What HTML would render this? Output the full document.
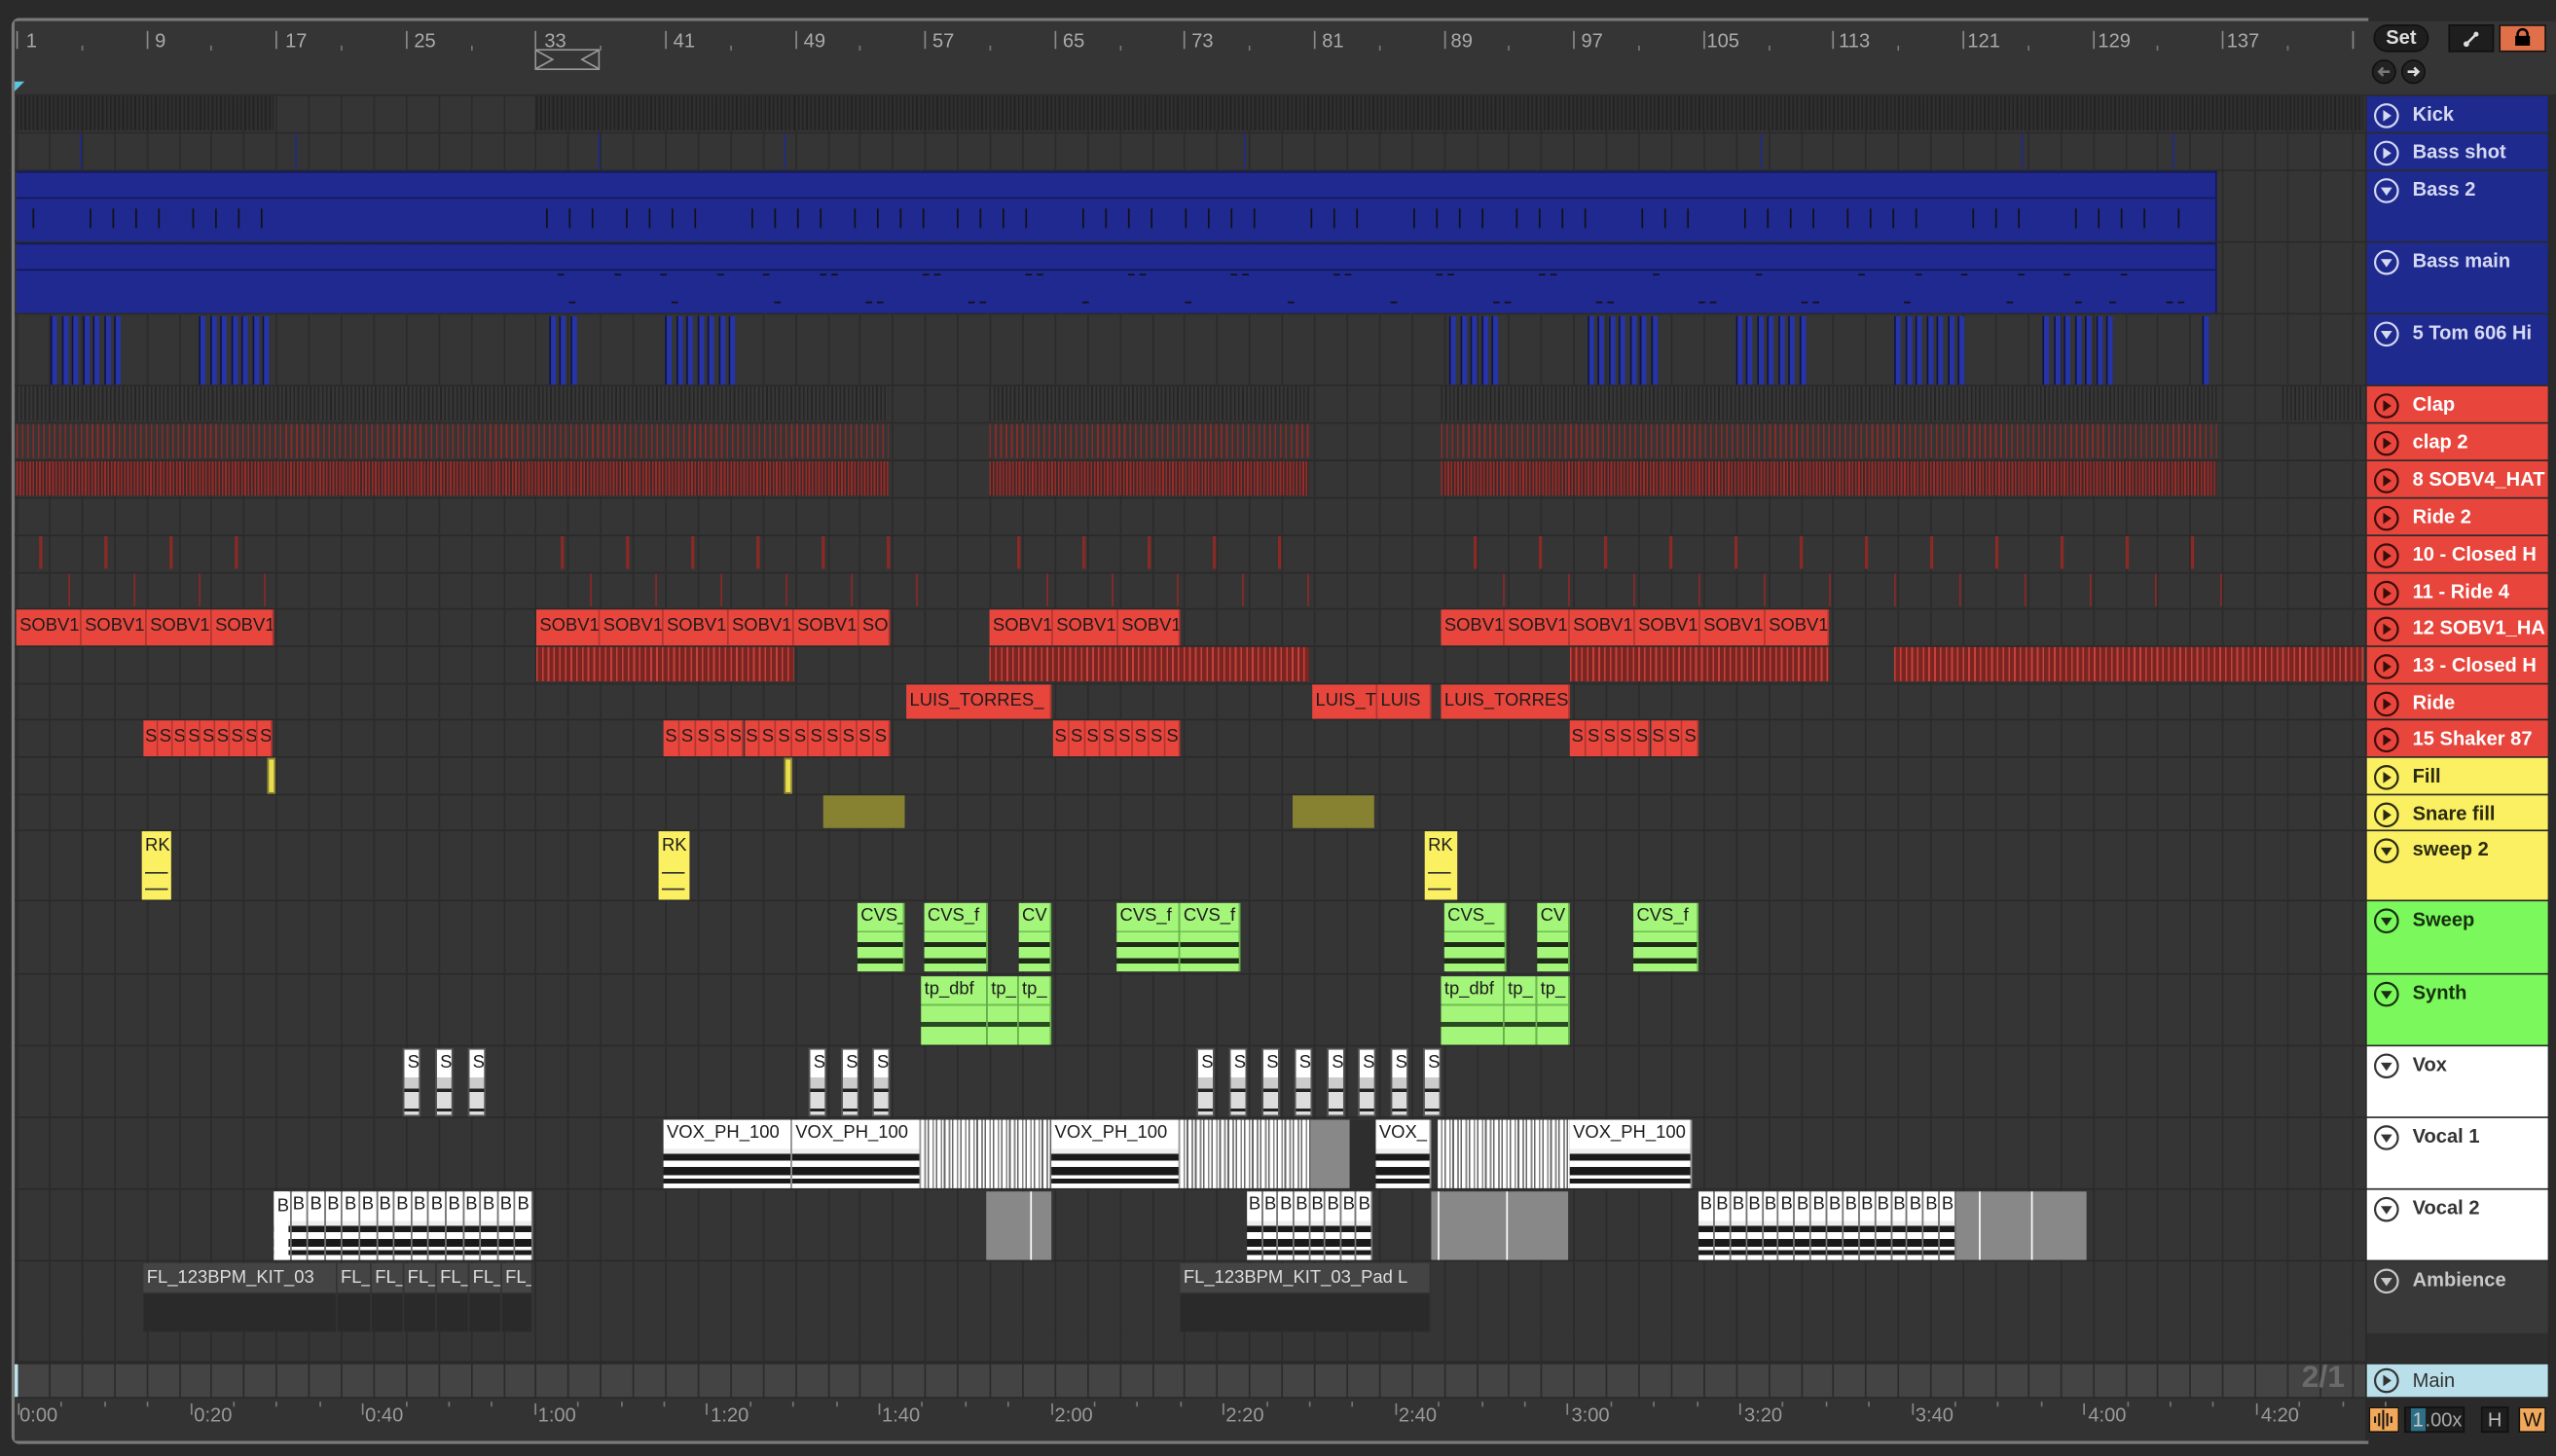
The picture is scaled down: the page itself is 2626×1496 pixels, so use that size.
<!DOCTYPE html>
<html><head><meta charset="utf-8">
<style>
html,body{margin:0;padding:0;background:#2a2a2a;width:2626px;height:1496px;overflow:hidden}
#s{position:absolute;left:0;top:0;width:1568px;height:893px;transform:scale(1.67474);transform-origin:0 0;background:#2a2a2a;font-family:"Liberation Sans",sans-serif}
.a{position:absolute}
.c{position:absolute;box-sizing:border-box;overflow:hidden;white-space:nowrap;font:11px "Liberation Sans Narrow","Liberation Sans",sans-serif;padding-left:2px;color:#1c1c1c}
.rd{background:#e8463d;border-right:1px solid #b23530;line-height:20px}
.h{position:absolute;left:1452px;width:111px;box-sizing:border-box;font:bold 12px "Liberation Sans",sans-serif;padding-left:28px;line-height:22px}
.h svg{position:absolute;left:4px;top:4px}
.bl{background:#1f2a8f;color:#d6d9f2}
.re{background:#e8453c;color:#fff}
.ye{background:#fbf062;color:#2a2a10}
.gr{background:#7bf95c;color:#17300f}
.wh{background:#fff;color:#333}
.lbl{position:absolute;top:18px;font:12px "Liberation Sans",sans-serif;color:#aaa}
.tl{position:absolute;top:861px;font:12px "Liberation Sans",sans-serif;color:#999}
.y2{background:#fbf062}
.g2{background:#a4f67a;border-right:1px solid #6ab84d}
.w2{background:#fff;border-right:1px solid #999}
</style></head><body><div id="s">
<div class="a" style="left:7px;top:11px;width:1446px;height:875px;border:2px solid #7a7a7a;border-right:none;border-radius:5px 0 0 5px;box-sizing:border-box"></div>
<div class="a" style="left:9px;top:13px;width:1442px;height:45px;background:#353535"></div>
<div class="a" style="left:1451px;top:13px;width:117px;height:45px;background:#353535"></div>
<div id="arr" class="a" style="left:9px;top:58px;width:1442px;height:800px;background:#2a2a2a;overflow:hidden"></div>
<div class="a" style="left:9px;top:858px;width:1442px;height:26px;background:#333"></div>
<div class="a" style="left:9px;top:837px;width:2px;height:20px;background:#bfe6f0"></div>
<div class="a" style="left:9px;top:50px;width:0;height:0;border-left:6px solid #5bc8e0;border-bottom:6px solid transparent"></div>
<div class="lbl" style="left:16px">1</div><div class="lbl" style="left:95px">9</div><div class="lbl" style="left:175px">17</div><div class="lbl" style="left:254px">25</div><div class="lbl" style="left:334px">33</div><div class="lbl" style="left:413px">41</div><div class="lbl" style="left:493px">49</div><div class="lbl" style="left:572px">57</div><div class="lbl" style="left:652px">65</div><div class="lbl" style="left:731px">73</div><div class="lbl" style="left:811px">81</div><div class="lbl" style="left:890px">89</div><div class="lbl" style="left:970px">97</div><div class="lbl" style="left:1047px">105</div><div class="lbl" style="left:1128px">113</div><div class="lbl" style="left:1207px">121</div><div class="lbl" style="left:1287px">129</div><div class="lbl" style="left:1366px">137</div>
<div id="rt" class="a" style="left:0;top:0"></div>
<svg class="a" style="left:328px;top:30px" width="40" height="13"><rect x="0.5" y="0.5" width="39" height="12" fill="none" stroke="#999"/><path d="M1 1 L11 6.5 L1 12 M39 1 L29 6.5 L39 12" fill="none" stroke="#999"/></svg>
<div class="a" style="left:1456px;top:15px;width:34px;height:17px;border-radius:9px;background:#1e1e1e;border:1px solid #111;box-sizing:border-box;color:#ddd;font:bold 12px 'Liberation Sans',sans-serif;text-align:center;line-height:15px">Set</div>
<div class="a" style="left:1502px;top:15px;width:28px;height:17px;background:#1e1e1e;border:1px solid #111;box-sizing:border-box"><svg width="26" height="15"><path d="M10 11 L16 5" stroke="#ddd" stroke-width="1.5"/><circle cx="10" cy="11" r="1.7" fill="#ddd"/><circle cx="16" cy="5" r="1.5" fill="#ddd"/></svg></div>
<div class="a" style="left:1533px;top:15px;width:29px;height:17px;background:#e07049;border:1px solid #111;box-sizing:border-box"><svg width="27" height="15"><rect x="9" y="6" width="9" height="6" fill="#000"/><path d="M10.5 7 V5 a3 3 0 0 1 6 0 V7" stroke="#000" stroke-width="1.5" fill="none"/></svg></div>
<svg class="a" style="left:1455px;top:36px" width="34" height="16"><circle cx="7.5" cy="8" r="7" fill="#222" stroke="#111"/><path d="M11 8 H5 M7 5.5 L4.5 8 L7 10.5" stroke="#777" stroke-width="1.5" fill="none"/><circle cx="25.5" cy="8" r="7" fill="#222" stroke="#111"/><path d="M22 8 H28 M26 5.5 L28.5 8 L26 10.5" stroke="#ddd" stroke-width="1.5" fill="none"/></svg>
<div class="a" style="left:1563px;top:58px;width:5px;height:800px;background:#2a2a2a"></div>

<div class="h bl" style="top:59px;height:22px"><svg width="16" height="16"><circle cx="8" cy="8" r="7" fill="none" stroke="#d6d9f2" stroke-width="1.3"/><path d="M6 4.5 L11 8 L6 11.5Z" fill="#d6d9f2"/></svg>Kick</div>
<div class="h bl" style="top:82px;height:22px"><svg width="16" height="16"><circle cx="8" cy="8" r="7" fill="none" stroke="#d6d9f2" stroke-width="1.3"/><path d="M6 4.5 L11 8 L6 11.5Z" fill="#d6d9f2"/></svg>Bass shot</div>
<div class="h bl" style="top:105px;height:43px"><svg width="16" height="16"><circle cx="8" cy="8" r="7" fill="none" stroke="#d6d9f2" stroke-width="1.3"/><path d="M4.5 6 L11.5 6 L8 11Z" fill="#d6d9f2"/></svg>Bass 2</div>
<div class="h bl" style="top:149px;height:43px"><svg width="16" height="16"><circle cx="8" cy="8" r="7" fill="none" stroke="#d6d9f2" stroke-width="1.3"/><path d="M4.5 6 L11.5 6 L8 11Z" fill="#d6d9f2"/></svg>Bass main</div>
<div class="h bl" style="top:193px;height:43px"><svg width="16" height="16"><circle cx="8" cy="8" r="7" fill="none" stroke="#d6d9f2" stroke-width="1.3"/><path d="M4.5 6 L11.5 6 L8 11Z" fill="#d6d9f2"/></svg>5 Tom 606 Hi</div>
<div class="h re" style="top:237px;height:22px"><svg width="16" height="16"><circle cx="8" cy="8" r="7" fill="none" stroke="#3a0d0b" stroke-width="1.3"/><path d="M6 4.5 L11 8 L6 11.5Z" fill="#3a0d0b"/></svg>Clap</div>
<div class="h re" style="top:260px;height:22px"><svg width="16" height="16"><circle cx="8" cy="8" r="7" fill="none" stroke="#3a0d0b" stroke-width="1.3"/><path d="M6 4.5 L11 8 L6 11.5Z" fill="#3a0d0b"/></svg>clap 2</div>
<div class="h re" style="top:283px;height:22px"><svg width="16" height="16"><circle cx="8" cy="8" r="7" fill="none" stroke="#3a0d0b" stroke-width="1.3"/><path d="M6 4.5 L11 8 L6 11.5Z" fill="#3a0d0b"/></svg>8 SOBV4_HAT</div>
<div class="h re" style="top:306px;height:22px"><svg width="16" height="16"><circle cx="8" cy="8" r="7" fill="none" stroke="#3a0d0b" stroke-width="1.3"/><path d="M6 4.5 L11 8 L6 11.5Z" fill="#3a0d0b"/></svg>Ride 2</div>
<div class="h re" style="top:329px;height:22px"><svg width="16" height="16"><circle cx="8" cy="8" r="7" fill="none" stroke="#3a0d0b" stroke-width="1.3"/><path d="M6 4.5 L11 8 L6 11.5Z" fill="#3a0d0b"/></svg>10 - Closed H</div>
<div class="h re" style="top:352px;height:21px"><svg width="16" height="16"><circle cx="8" cy="8" r="7" fill="none" stroke="#3a0d0b" stroke-width="1.3"/><path d="M6 4.5 L11 8 L6 11.5Z" fill="#3a0d0b"/></svg>11 - Ride 4</div>
<div class="h re" style="top:374px;height:22px"><svg width="16" height="16"><circle cx="8" cy="8" r="7" fill="none" stroke="#3a0d0b" stroke-width="1.3"/><path d="M6 4.5 L11 8 L6 11.5Z" fill="#3a0d0b"/></svg>12 SOBV1_HA</div>
<div class="h re" style="top:397px;height:22px"><svg width="16" height="16"><circle cx="8" cy="8" r="7" fill="none" stroke="#3a0d0b" stroke-width="1.3"/><path d="M6 4.5 L11 8 L6 11.5Z" fill="#3a0d0b"/></svg>13 - Closed H</div>
<div class="h re" style="top:420px;height:21px"><svg width="16" height="16"><circle cx="8" cy="8" r="7" fill="none" stroke="#3a0d0b" stroke-width="1.3"/><path d="M6 4.5 L11 8 L6 11.5Z" fill="#3a0d0b"/></svg>Ride</div>
<div class="h re" style="top:442px;height:22px"><svg width="16" height="16"><circle cx="8" cy="8" r="7" fill="none" stroke="#3a0d0b" stroke-width="1.3"/><path d="M6 4.5 L11 8 L6 11.5Z" fill="#3a0d0b"/></svg>15 Shaker 87</div>
<div class="h ye" style="top:465px;height:22px"><svg width="16" height="16"><circle cx="8" cy="8" r="7" fill="none" stroke="#2a2a10" stroke-width="1.3"/><path d="M6 4.5 L11 8 L6 11.5Z" fill="#2a2a10"/></svg>Fill</div>
<div class="h ye" style="top:488px;height:21px"><svg width="16" height="16"><circle cx="8" cy="8" r="7" fill="none" stroke="#2a2a10" stroke-width="1.3"/><path d="M6 4.5 L11 8 L6 11.5Z" fill="#2a2a10"/></svg>Snare fill</div>
<div class="h ye" style="top:510px;height:42px"><svg width="16" height="16"><circle cx="8" cy="8" r="7" fill="none" stroke="#2a2a10" stroke-width="1.3"/><path d="M4.5 6 L11.5 6 L8 11Z" fill="#2a2a10"/></svg>sweep 2</div>
<div class="h gr" style="top:553px;height:44px"><svg width="16" height="16"><circle cx="8" cy="8" r="7" fill="none" stroke="#17300f" stroke-width="1.3"/><path d="M4.5 6 L11.5 6 L8 11Z" fill="#17300f"/></svg>Sweep</div>
<div class="h gr" style="top:598px;height:43px"><svg width="16" height="16"><circle cx="8" cy="8" r="7" fill="none" stroke="#17300f" stroke-width="1.3"/><path d="M4.5 6 L11.5 6 L8 11Z" fill="#17300f"/></svg>Synth</div>
<div class="h wh" style="top:642px;height:43px"><svg width="16" height="16"><circle cx="8" cy="8" r="7" fill="none" stroke="#333" stroke-width="1.3"/><path d="M4.5 6 L11.5 6 L8 11Z" fill="#333"/></svg>Vox</div>
<div class="h wh" style="top:686px;height:43px"><svg width="16" height="16"><circle cx="8" cy="8" r="7" fill="none" stroke="#333" stroke-width="1.3"/><path d="M4.5 6 L11.5 6 L8 11Z" fill="#333"/></svg>Vocal 1</div>
<div class="h wh" style="top:730px;height:43px"><svg width="16" height="16"><circle cx="8" cy="8" r="7" fill="none" stroke="#333" stroke-width="1.3"/><path d="M4.5 6 L11.5 6 L8 11Z" fill="#333"/></svg>Vocal 2</div>
<div class="h" style="top:774px;height:44px;background:#393939;color:#c8c8c8"><svg width="16" height="16"><circle cx="8" cy="8" r="7" fill="none" stroke="#c8c8c8" stroke-width="1.3"/><path d="M4.5 6 L11.5 6 L8 11Z" fill="#c8c8c8"/></svg>Ambience</div>
<div class="a" style="left:1452px;top:818px;width:111px;height:18px;background:#2e2e2e"></div>
<div class="h" style="top:837px;height:20px;line-height:20px;background:#b8dfea;color:#333;font-weight:normal"><svg width="16" height="16" style="top:2px"><circle cx="8" cy="8" r="7" fill="none" stroke="#333" stroke-width="1.3"/><path d="M6 4.5 L11 8 L6 11.5Z" fill="#333"/></svg>Main</div>
<div class="a" style="left:1412px;top:835px;font:bold 19px 'Liberation Sans',sans-serif;color:#6a6a6a">2/1</div>

<div id="clips">
<div class="a" style="left:10px;top:105px;width:1350px;height:43px;background:#20298f;border-top:1px solid #14195a;border-right:1px solid #14195a;box-sizing:border-box"><div class="a" style="left:0;top:15px;width:100%;height:1px;background:#14195a"></div></div>
<div class="a" style="left:10px;top:149px;width:1350px;height:43px;background:#20298f;border-top:1px solid #14195a;border-right:1px solid #14195a;box-sizing:border-box"><div class="a" style="left:0;top:15px;width:100%;height:1px;background:#14195a"></div></div>
<div class="c rd" style="left:10px;top:374px;width:40px;height:22px">SOBV1</div><div class="c rd" style="left:50px;top:374px;width:40px;height:22px">SOBV1</div><div class="c rd" style="left:90px;top:374px;width:40px;height:22px">SOBV1</div><div class="c rd" style="left:130px;top:374px;width:38px;height:22px">SOBV1</div>
<div class="c rd" style="left:329px;top:374px;width:39px;height:22px">SOBV1</div><div class="c rd" style="left:368px;top:374px;width:39px;height:22px">SOBV1</div><div class="c rd" style="left:407px;top:374px;width:40px;height:22px">SOBV1</div><div class="c rd" style="left:447px;top:374px;width:40px;height:22px">SOBV1</div><div class="c rd" style="left:487px;top:374px;width:40px;height:22px">SOBV1</div><div class="c rd" style="left:527px;top:374px;width:19px;height:22px">SO</div>
<div class="c rd" style="left:607px;top:374px;width:39px;height:22px">SOBV1</div><div class="c rd" style="left:646px;top:374px;width:40px;height:22px">SOBV1</div><div class="c rd" style="left:686px;top:374px;width:38px;height:22px">SOBV1</div>
<div class="c rd" style="left:884px;top:374px;width:39px;height:22px">SOBV1</div><div class="c rd" style="left:923px;top:374px;width:40px;height:22px">SOBV1</div><div class="c rd" style="left:963px;top:374px;width:40px;height:22px">SOBV1</div><div class="c rd" style="left:1003px;top:374px;width:40px;height:22px">SOBV1</div><div class="c rd" style="left:1043px;top:374px;width:40px;height:22px">SOBV1</div><div class="c rd" style="left:1083px;top:374px;width:39px;height:22px">SOBV1</div>
<div class="c rd" style="left:556px;top:420px;width:89px;height:21px">LUIS_TORRES_</div>
<div class="c rd" style="left:805px;top:420px;width:40px;height:21px">LUIS_T</div>
<div class="c rd" style="left:845px;top:420px;width:33px;height:21px">LUIS</div>
<div class="c rd" style="left:884px;top:420px;width:79px;height:21px">LUIS_TORRES</div>
<div id="shk"></div>
<div class="a" style="left:164px;top:465px;width:3px;height:20px;background:#e8de50;border:1px solid #8a8330"></div>
<div class="a" style="left:481px;top:465px;width:3px;height:20px;background:#e8de50;border:1px solid #8a8330"></div>
<div class="a" style="left:505px;top:488px;width:50px;height:20px;background:#878232"></div>
<div class="a" style="left:793px;top:488px;width:50px;height:20px;background:#878232"></div>
<div class="c y2" style="left:87px;top:510px;width:18px;height:42px;line-height:18px">RK<div class="a" style="left:2px;top:25px;width:14px;height:1px;background:#333"></div><div class="a" style="left:2px;top:35px;width:14px;height:1px;background:#333"></div></div>
<div class="c y2" style="left:404px;top:510px;width:19px;height:42px;line-height:18px">RK<div class="a" style="left:2px;top:25px;width:14px;height:1px;background:#333"></div><div class="a" style="left:2px;top:35px;width:14px;height:1px;background:#333"></div></div>
<div class="c y2" style="left:874px;top:510px;width:20px;height:42px;line-height:18px">RK<div class="a" style="left:2px;top:25px;width:14px;height:1px;background:#333"></div><div class="a" style="left:2px;top:35px;width:14px;height:1px;background:#333"></div></div>
<div class="c g2 wv" style="left:526px;top:554px;width:29px;height:42px">CVS_</div>
<div class="c g2 wv" style="left:567px;top:554px;width:39px;height:42px">CVS_f</div>
<div class="c g2 wv" style="left:625px;top:554px;width:20px;height:42px">CV</div>
<div class="c g2 wv" style="left:685px;top:554px;width:39px;height:42px">CVS_f</div>
<div class="c g2 wv" style="left:724px;top:554px;width:37px;height:42px">CVS_f</div>
<div class="c g2 wv" style="left:886px;top:554px;width:38px;height:42px">CVS_</div>
<div class="c g2 wv" style="left:943px;top:554px;width:20px;height:42px">CV</div>
<div class="c g2 wv" style="left:1002px;top:554px;width:40px;height:42px">CVS_f</div>
<div class="c g2 wv2" style="left:565px;top:599px;width:41px;height:42px">tp_dbf</div>
<div class="c g2 wv2" style="left:606px;top:599px;width:19px;height:42px">tp_</div>
<div class="c g2 wv2" style="left:625px;top:599px;width:20px;height:42px">tp_</div>
<div class="c g2 wv2" style="left:884px;top:599px;width:39px;height:42px">tp_dbf</div>
<div class="c g2 wv2" style="left:923px;top:599px;width:20px;height:42px">tp_</div>
<div class="c g2 wv2" style="left:943px;top:599px;width:20px;height:42px">tp_</div>
<div id="vox"></div>
<div class="c w2 vw" style="left:407px;top:687px;width:79px;height:42px">VOX_PH_100</div>
<div class="c w2 vw" style="left:486px;top:687px;width:79px;height:42px">VOX_PH_100</div>
<div class="c st" style="left:565px;top:687px;width:80px;height:42px"></div>
<div class="c w2 vw" style="left:645px;top:687px;width:79px;height:42px">VOX_PH_100</div>
<div class="c st" style="left:724px;top:687px;width:80px;height:42px"></div>
<div class="a" style="left:804px;top:687px;width:24px;height:42px;background:#888"></div>
<div class="a" style="left:828px;top:687px;width:16px;height:42px;background:#2e2e2e"></div>
<div class="c w2 vw" style="left:844px;top:687px;width:34px;height:42px">VOX_</div>
<div class="c st" style="left:882px;top:687px;width:81px;height:42px"></div>
<div class="c w2 vw" style="left:963px;top:687px;width:75px;height:42px">VOX_PH_100</div>
<div id="v2"></div>
<div class="a" style="left:605px;top:731px;width:40px;height:42px;background:#888"><div class="a" style="left:27px;top:0;width:1px;height:42px;background:#fff"></div></div>
<div class="a" style="left:878px;top:731px;width:84px;height:42px;background:#888"><div class="a" style="left:4px;top:0;width:1px;height:42px;background:#fff"></div><div class="a" style="left:46px;top:0;width:1px;height:42px;background:#fff"></div></div>
<div class="a" style="left:1200px;top:731px;width:80px;height:42px;background:#888"><div class="a" style="left:14px;top:0;width:1px;height:42px;background:#fff"></div><div class="a" style="left:46px;top:0;width:1px;height:42px;background:#fff"></div></div>
<div class="c" style="left:168px;top:731px;width:9px;height:42px;background:#fff;line-height:18px">B</div>
<div class="c am" style="left:88px;top:775px;width:119px;height:42px">FL_123BPM_KIT_03</div>
<div class="c am" style="left:207px;top:775px;width:21px;height:42px">FL_</div>
<div class="c am" style="left:228px;top:775px;width:20px;height:42px">FL_</div>
<div class="c am" style="left:248px;top:775px;width:20px;height:42px">FL_</div>
<div class="c am" style="left:268px;top:775px;width:20px;height:42px">FL_</div>
<div class="c am" style="left:288px;top:775px;width:20px;height:42px">FL_</div>
<div class="c am" style="left:308px;top:775px;width:19px;height:42px">FL_</div>
<div class="c am" style="left:724px;top:775px;width:154px;height:42px">FL_123BPM_KIT_03_Pad L</div>
</div>
<div id="ov" class="a" style="left:0;top:0"></div>
<style>
.wv,.wv2{line-height:17px;background:linear-gradient(#a4f67a 0 17px,#6fbf52 17px 18px,#a4f67a 18px 24px,#1e2a18 24px 27px,#a4f67a 27px 34px,#1e2a18 34px 37px,#a4f67a 37px)}
.wv2{background:linear-gradient(#a4f67a 0 17px,#6fbf52 17px 18px,#a4f67a 18px 28px,#2a4a22 28px 31px,#a4f67a 31px)}
.vw{line-height:17px;background:linear-gradient(#fff 0 18px,#eee 18px 21px,#1a1a1a 21px 25px,#fff 25px 29px,#1a1a1a 29px 34px,#fff 34px 36px,#1a1a1a 36px 39px,#fff 39px)}
.st{background:repeating-linear-gradient(90deg,#fff 0 2px,#888 2px 3px,#fff 3px 4px,#666 4px 5px);}
.am{color:#ddd;line-height:18px;background:linear-gradient(#444 0 18px,#333 18px 19px,#2a2a2a 19px);border-right:1px solid #333}
</style>
<div class="tl" style="left:12px">0:00</div><div class="tl" style="left:119px">0:20</div><div class="tl" style="left:224px">0:40</div><div class="tl" style="left:330px">1:00</div><div class="tl" style="left:436px">1:20</div><div class="tl" style="left:541px">1:40</div><div class="tl" style="left:647px">2:00</div><div class="tl" style="left:752px">2:20</div><div class="tl" style="left:858px">2:40</div><div class="tl" style="left:964px">3:00</div><div class="tl" style="left:1070px">3:20</div><div class="tl" style="left:1175px">3:40</div><div class="tl" style="left:1281px">4:00</div><div class="tl" style="left:1387px">4:20</div>
<div class="a" style="left:1453px;top:863px;width:19px;height:16px;background:#f2a85a;border:1px solid #111;box-sizing:border-box"><svg width="17" height="14"><path d="M3 5v4M5.5 3v8M8 1v12M10.5 3v8M13 5v4" stroke="#111" stroke-width="1.2"/></svg></div>
<div class="a" style="left:1475px;top:863px;width:37px;height:16px;background:#1e1e1e;border:1px solid #111;box-sizing:border-box;font:12px 'Liberation Sans',sans-serif;color:#aaa;line-height:14px;padding-left:3px"><span style="background:#2d6f86;color:#ccc;padding:0 1px">1</span>.00x</div>
<div class="a" style="left:1522px;top:863px;width:17px;height:16px;background:#1e1e1e;border:1px solid #111;box-sizing:border-box;font:12px 'Liberation Sans',sans-serif;color:#bbb;line-height:14px;text-align:center">H</div>
<div class="a" style="left:1545px;top:863px;width:17px;height:16px;background:#f2a85a;border:1px solid #111;box-sizing:border-box;font:12px 'Liberation Sans',sans-serif;color:#111;line-height:14px;text-align:center">W</div>
</div>
<script>
(function(){
var arr=document.getElementById('arr');var h='';
var rows=[[59,22],[82,22],[105,43],[149,43],[193,43],[237,22],[260,22],[283,22],[306,22],[329,22],[352,21],[374,22],[397,22],[420,21],[442,22],[465,22],[488,21],[510,42],[553,44],[598,43],[642,43],[686,43],[730,43],[774,44],[818,17],[837,20]];
rows.forEach(function(r){var bg=r[0]==837?'#444':'#353535';h+='<div class="a" style="left:0;top:'+(r[0]-58)+'px;width:1442px;height:'+r[1]+'px;background:'+bg+'"></div>';});
for(var b=1;b<=146;b+=2){var x=1+(b-1)*9.95;h+='<div class="a" style="left:'+x+'px;top:0;width:1px;height:800px;background:#2b2b2b"></div>';}
function stripe(x1,x2,top,hh,col,bg,step){h+='<div class="a" style="left:'+(x1-9)+'px;top:'+(top-58)+'px;width:'+(x2-x1)+'px;height:'+hh+'px;background:repeating-linear-gradient(90deg,'+col+' 0 1px,'+bg+' 1px '+step+'px)"></div>';}
[[10,168],[329,487],[487,1450]].forEach(function(s){stripe(s[0],s[1],59,21,'#232323','#2f2f2f',2.5)});
[[10,545],[607,803],[884,1360],[1400,1450]].forEach(function(s){stripe(s[0],s[1],237,21,'#262626','#363636',2.5)});
[[10,545],[607,803],[884,1360]].forEach(function(s){stripe(s[0],s[1],260,21,'#8a2a27','#353535',3.3);stripe(s[0],s[1],283,21,'#9a2b28','#3a2a2a',2)});
[[329,487],[607,803],[963,1122],[1162,1450]].forEach(function(s){stripe(s[0],s[1],397,21,'#c4423b','#7a2522',3.5)});
for(var x=24;x<1360;x+=40){if((x>170&&x<329)||(x>545&&x<607)||(x>803&&x<884))continue;h+='<div class="a" style="left:'+(x-9)+'px;top:271px;width:2px;height:20px;background:#8a2a27"></div>';h+='<div class="a" style="left:'+(x+18-9)+'px;top:294px;width:1px;height:20px;background:#8a2a27"></div>';}
[49,181,367,481,763,1080,1240,1333].forEach(function(x){h+='<div class="a" style="left:'+(x-9)+'px;top:24px;width:1px;height:21px;background:#1f2a8f"></div>'});
for(var x=18;x<1356;x+=6.5){if((x>162&&x<333)||(x>480&&x<886))continue;if(Math.sin(x*0.9)>0.1)h+='<div class="a" style="left:'+(x-9)+'px;top:136px;width:3px;height:42px;background:#2634a8;border-left:1px solid #10143f"></div>';}
arr.innerHTML=h;
var o='';
for(var x=20;x<1350;x+=7){if(x>160&&x<329)continue;if(Math.sin(x*1.3)>0.3)o+='<div class="a" style="left:'+x+'px;top:128px;width:1px;height:12px;background:#111"></div>';if(x>170&&Math.cos(x*0.7)>0.4)o+='<div class="a" style="left:'+x+'px;top:'+(Math.sin(x)>0?168:185)+'px;width:4px;height:1px;background:#111"></div>';}
document.getElementById('ov').innerHTML=o;
var s='';function sc(a,b,w){for(var x=a;x<b-1;x+=w){s+='<div class="c rd" style="left:'+x+'px;top:442px;width:'+Math.min(w,b-x)+'px;height:22px;padding-left:1px">S</div>';}}
sc(88,168,8.8);sc(407,546,9.9);sc(646,724,9.8);sc(963,1042,9.9);
document.getElementById('shk').innerHTML=s;
var v='';[247,267,287,496,516,535,734,754,774,794,814,833,853,873].forEach(function(x){v+='<div class="c" style="left:'+x+'px;top:643px;width:11px;height:42px;line-height:17px;background:linear-gradient(#fff 0 17px,#ccc 17px 24px,#222 24px 26px,#ddd 26px 36px,#222 36px 38px,#ddd 38px);border:1px solid #555">S</div>'});
document.getElementById('vox').innerHTML=v;
var w='';function bc(a,b,n){var ww=(b-a)/n;for(var i=0;i<n;i++){w+='<div class="c vw" style="left:'+(a+i*ww)+'px;top:731px;width:'+ww+'px;height:42px;border-right:1px solid #777;padding-left:1px">B</div>';}}
bc(168,327,15);bc(765,842,8);bc(1042,1200,16);
document.getElementById('v2').innerHTML=w;
var rt='';for(var b=1;b<=146;b++){var x=10+(b-1)*9.95;if((b-1)%8==0)rt+='<div class="a" style="left:'+x+'px;top:19px;width:1px;height:11px;background:#888"></div>';else if((b-1)%4==0)rt+='<div class="a" style="left:'+x+'px;top:28px;width:1px;height:3px;background:#777"></div>';}
for(var t=0;t<14;t++){var x=11+t*105.6;rt+='<div class="a" style="left:'+x+'px;top:861px;width:1px;height:7px;background:#888"></div>';for(var k=1;k<4;k++)rt+='<div class="a" style="left:'+(x+k*26.4)+'px;top:860px;width:1px;height:3px;background:#777"></div>';}
document.getElementById('rt').innerHTML=rt;
})();
</script>
</body></html>
